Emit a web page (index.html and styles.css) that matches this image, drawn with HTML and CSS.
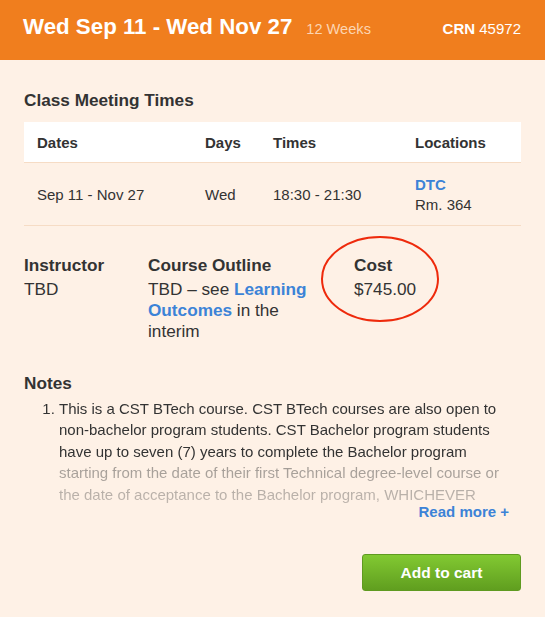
FILE: index.html
```html
<!DOCTYPE html>
<html>
<head>
<meta charset="utf-8">
<link rel="stylesheet" href="styles.css">
</head>
<body>
<div class="card">
  <header class="top">
    <div class="range"><span class="dates">Wed Sep 11 - Wed Nov 27</span><span class="weeks">12 Weeks</span></div>
    <div class="crn"><b>CRN</b> 45972</div>
  </header>
  <main class="content">
    <h2 class="heading">Class Meeting Times</h2>
    <table class="times">
      <thead>
        <tr><th class="c1">Dates</th><th class="c2">Days</th><th class="c3">Times</th><th class="c4">Locations</th></tr>
      </thead>
      <tbody>
        <tr><td>Sep 11 - Nov 27</td><td>Wed</td><td>18:30 - 21:30</td><td><a class="link">DTC</a><br>Rm. 364</td></tr>
      </tbody>
    </table>
    <section class="info">
      <div class="col">
        <h3 class="label">Instructor</h3>
        <p class="val">TBD</p>
      </div>
      <div class="col outline">
        <h3 class="label">Course Outline</h3>
        <p class="val">TBD – see <a class="link">Learning Outcomes</a> in the interim</p>
      </div>
      <div class="col cost">
        <h3 class="label">Cost</h3>
        <p class="val">$745.00</p>
        <svg class="circle" width="122" height="90" viewBox="0 0 122 90"><ellipse cx="61" cy="45" rx="58" ry="42" fill="none" stroke="#ee2a0c" stroke-width="2"/></svg>
      </div>
    </section>
    <h3 class="label notes-h">Notes</h3>
    <div class="notes">
      <ol>
        <li>This is a CST BTech course. CST BTech courses are also open to non-bachelor program students. CST Bachelor program students have up to seven (7) years to complete the Bachelor program starting from the date of their first Technical degree-level course or the date of acceptance to the Bachelor program, WHICHEVER comes first.</li>
      </ol>
    </div>
    <div class="more"><a class="link">Read more +</a></div>
    <div class="actions"><button class="cart">Add to cart</button></div>
  </main>
</div>
</body>
</html>
```
FILE: styles.css
```css
html, body {
  margin: 0;
  padding: 0;
  background: #fef1e6;
  font-family: "Liberation Sans", Arial, sans-serif;
  color: #333;
}
.card {
  width: 545px;
  height: 617px;
  overflow: hidden;
}
.top {
  height: 60px;
  box-sizing: border-box;
  background: #f07e1e;
  display: flex;
  justify-content: space-between;
  align-items: baseline;
  padding: 13.5px 24px 0 23px;
  line-height: 26px;
  color: #fff;
}
.dates {
  font-size: 22.3px;
  font-weight: bold;
}
.weeks {
  font-size: 14.6px;
  color: #fcd5b2;
  margin-left: 14px;
}
.crn {
  font-size: 15px;
}
.content {
  padding: 0 24px;
}
.heading {
  margin: 0;
  padding-top: 30px;
  font-size: 17.2px;
  line-height: 20px;
  font-weight: bold;
  color: #333;
}
.times {
  margin-top: 12px;
  width: 100%;
  border-collapse: collapse;
  font-size: 15px;
}
.times th {
  background: #fff;
  text-align: left;
  font-weight: bold;
  line-height: 17px;
  padding: 12px 0 11px;
  border-bottom: 1px solid #f6dcc5;
  vertical-align: middle;
}
.times td {
  padding: 12px 0 10px;
  border-bottom: 1px solid #f6dcc5;
  vertical-align: middle;
  line-height: 20px;
}
.times th:first-child, .times td:first-child {
  padding-left: 13px;
}
.c1 { width: 168px; }
.c2 { width: 68px; }
.c3 { width: 142px; }
.link {
  color: #3c83d7;
  font-weight: bold;
  text-decoration: none;
}
.info {
  display: grid;
  grid-template-columns: 124px 206px 1fr;
  margin-top: 29px;
}
.col {
  position: relative;
}
.label {
  margin: 0;
  font-size: 17.2px;
  line-height: 21px;
  font-weight: bold;
}
.val {
  margin: 3px 0 0;
  font-size: 17.2px;
  line-height: 21px;
}
.outline .val {
  width: 175px;
}
.circle {
  position: absolute;
  left: -35px;
  top: -21px;
}
.notes-h {
  margin-top: 31px;
}
.notes {
  height: 110px;
  overflow: hidden;
  -webkit-mask-image: linear-gradient(to bottom, #000 0%, #000 61%, rgba(0,0,0,0.45) 65%, rgba(0,0,0,0.3) 100%);
  mask-image: linear-gradient(to bottom, #000 0%, #000 61%, rgba(0,0,0,0.45) 65%, rgba(0,0,0,0.3) 100%);
}
.notes ol {
  margin: 4px 0 0;
  padding: 0 15px 0 35px;
  font-size: 15px;
  line-height: 21.4px;
}
.more {
  text-align: right;
  padding-right: 12px;
  font-size: 15px;
  line-height: 16px;
}
.actions {
  display: flex;
  justify-content: flex-end;
  margin-top: 34px;
}
.cart {
  width: 159px;
  height: 37px;
  border: 1px solid #5f9a20;
  border-radius: 3px;
  background: linear-gradient(to bottom, #82c932, #609e1f);
  color: #fff;
  font-family: "Liberation Sans", Arial, sans-serif;
  font-weight: bold;
  font-size: 15.5px;
  cursor: pointer;
  padding: 0;
}
```
